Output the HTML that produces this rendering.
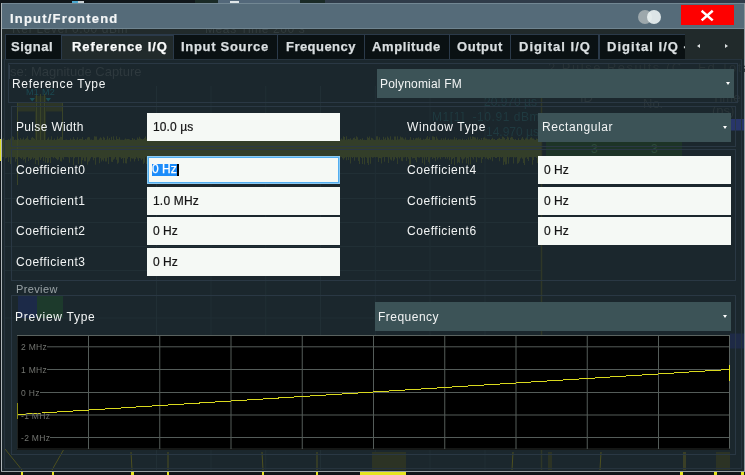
<!DOCTYPE html>
<html><head><meta charset="utf-8">
<style>
html,body{margin:0;padding:0;}
body{width:745px;height:475px;overflow:hidden;position:relative;background:#10161a;font-family:"Liberation Sans",sans-serif;}
.a{position:absolute;}
.t{position:absolute;white-space:nowrap;line-height:1;will-change:transform;}
.tab{position:absolute;top:34px;height:25.5px;background:#0a1113;border:1.5px solid #2b3a4a;box-sizing:border-box;}
.tabt{position:absolute;top:39.7px;font-weight:bold;font-size:13px;color:#d9dee0;white-space:nowrap;line-height:1;will-change:transform;-webkit-text-stroke:0.25px #d9dee0;}
.lbl{position:absolute;font-size:12px;color:#f2f4f4;white-space:nowrap;line-height:1;will-change:transform;}
.fld{position:absolute;background:#f5f9f5;box-sizing:border-box;}
.ftx{position:absolute;font-size:12px;color:#141414;white-space:nowrap;line-height:1;will-change:transform;-webkit-text-stroke:0.2px #141414;}
.dd{position:absolute;background:#3c5357;box-sizing:border-box;}
.ddt{position:absolute;font-size:12px;color:#f2f4f4;white-space:nowrap;line-height:1;will-change:transform;}
.arr{position:absolute;width:0;height:0;border-left:2.7px solid transparent;border-right:2.7px solid transparent;border-top:3.2px solid #fff;}
.grp{position:absolute;border:1px solid #2a3844;box-sizing:border-box;}
.cl{position:absolute;font-size:8.5px;color:#737571;white-space:nowrap;line-height:1;background:#000;padding:0 0 0 3px;letter-spacing:0.3px;will-change:transform;}
</style></head><body>

<!-- underlying display: top strip -->
<div class="a" style="left:195px;top:0;width:23px;height:3px;background:#1a2a26;"></div>
<div class="a" style="left:218px;top:0;width:82px;height:3px;background:#53687a;"></div>
<div class="a" style="left:300px;top:0;width:25px;height:3px;background:#1a2a26;"></div>
<div class="a" style="left:325px;top:0;width:420px;height:3px;background:#2f3b49;"></div>
<div class="a" style="left:72px;top:1px;width:6px;height:2px;background:#4aa8d0;"></div>
<div class="a" style="left:78px;top:1px;width:6px;height:2px;background:#c8d0d4;"></div>
<div class="a" style="left:230px;top:1px;width:9px;height:2px;background:#e0e6e8;"></div>
<!-- underlying edges -->
<div class="a" style="left:1px;top:3px;width:1px;height:469px;background:#aeb5b8;"></div>
<div class="a" style="left:0;top:138.5px;width:1px;height:22px;background:#dcdc22;"></div>
<div class="a" style="left:744px;top:3px;width:1px;height:469px;background:#8e989d;"></div>
<div class="a" style="left:1px;top:471px;width:744px;height:1px;background:#9aa2a5;"></div>

<!-- title bar -->
<div class="a" style="left:2px;top:3px;width:742px;height:26px;background:#556b79;"></div>
<div class="a" style="left:2px;top:3px;width:742px;height:1px;background:#728793;"></div>
<div class="a" style="left:2px;top:28px;width:742px;height:1px;background:#6f8490;"></div>
<div class="t" style="left:10.2px;top:11.7px;font-weight:bold;font-size:13px;letter-spacing:1.2px;color:#f4f6f7;-webkit-text-stroke:0.2px #f4f6f7;">Input/Frontend</div>
<div class="a" style="left:638.4px;top:10px;width:14px;height:14px;border-radius:50%;background:#9da8ac;"></div>
<div class="a" style="left:647.2px;top:10px;width:14px;height:14px;border-radius:50%;background:rgba(236,243,243,0.9);"></div>
<div class="a" style="left:680.6px;top:5px;width:53.4px;height:19.8px;background:#fe0000;"></div>
<svg class="a" style="left:680px;top:5px;" width="54" height="20" viewBox="0 0 54 20">
<path d="M22.6 6.6 L31.8 14.6 M31.8 6.6 L22.6 14.6" stroke="#fff" stroke-width="2.5" stroke-linecap="square"/>
</svg>

<!-- body -->
<div class="a" style="left:2px;top:29px;width:742px;height:442px;background:#1b272d;"></div>
<div class="a" style="left:2px;top:29px;width:742px;height:30px;background:#212a2b;"></div>

<!-- faint underlying grid -->
<svg class="a" style="left:0;top:0;" width="745" height="475">
 <g stroke="#212f35" stroke-width="1">
  <line x1="5" y1="173.5" x2="541" y2="173.5"/>
  <line x1="5" y1="198.5" x2="541" y2="198.5"/>
  <line x1="5" y1="222.5" x2="541" y2="222.5"/>
  <line x1="5" y1="246.5" x2="541" y2="246.5"/>
  <line x1="5" y1="270.5" x2="541" y2="270.5"/>
  <line x1="5" y1="318" x2="541" y2="318"/>
  <line x1="156.5" y1="86" x2="156.5" y2="470"/>
  <line x1="211" y1="86" x2="211" y2="470"/>
  <line x1="265.8" y1="86" x2="265.8" y2="470"/>
  <line x1="320.5" y1="86" x2="320.5" y2="470"/>
  <line x1="375.3" y1="86" x2="375.3" y2="470"/>
  <line x1="430" y1="86" x2="430" y2="470"/>
  <line x1="485" y1="86" x2="485" y2="470"/>
 </g>
 <line x1="541.5" y1="86" x2="541.5" y2="470" stroke="#2f3727" stroke-width="1.5"/>
 <!-- olive spectrum band -->
 <path d="M2 139.6V139.6H3V138.3H4V138.9H5V140.0H6V140.0H7V140.0H8V139.3H9V139.9H10V138.4H11V138.7H12V136.2H13V137.1H14V139.9H15V139.6H16V139.9H17V138.4H18V138.8H19V140.0H20V138.1H21V139.6H22V139.2H23V137.5H24V139.8H25V138.9H26V137.9H27V136.2H28V139.3H29V139.9H30V140.0H31V137.7H32V136.9H33V138.1H34V138.7H35V137.2H36V139.1H37V140.0H38V138.3H39V137.3H40V139.4H41V140.0H42V139.9H43V140.0H44V139.9H45V139.4H46V140.0H47V138.8H48V137.3H49V139.7H50V139.5H51V136.3H52V139.9H53V139.8H54V138.6H55V140.0H56V139.5H57V136.4H58V138.9H59V138.2H60V136.8H61V136.9H62V139.4H63V140.0H64V140.0H65V139.8H66V139.5H67V140.0H68V140.0H69V140.0H70V138.5H71V139.7H72V139.5H73V137.1H74V139.1H75V140.0H76V139.5H77V137.3H78V140.0H79V138.9H80V138.8H81V138.9H82V137.0H83V139.7H84V139.9H85V138.9H86V139.6H87V137.4H88V137.1H89V137.3H90V139.8H91V139.5H92V140.0H93V139.7H94V136.3H95V136.5H96V136.4H97V139.8H98V139.8H99V138.4H100V137.2H101V138.3H102V140.0H103V136.7H104V137.7H105V139.9H106V139.6H107V136.2H108V139.4H109V137.9H110V139.9H111V136.7H112V139.9H113V136.2H114V139.5H115V139.9H116V136.2H117V138.9H118V139.2H119V137.3H120V139.7H121V139.8H122V139.7H123V139.9H124V139.5H125V138.6H126V139.3H127V139.0H128V138.9H129V139.2H130V140.0H131V139.9H132V137.9H133V139.6H134V138.8H135V140.0H136V139.8H137V137.6H138V138.7H139V136.7H140V138.5H141V139.0H142V139.2H143V139.1H144V138.0H145V136.4H146V138.7H147V137.2H148V139.9H149V140.0H150V140.0H151V137.5H152V139.9H153V138.3H154V136.9H155V139.8H156V139.4H157V136.1H158V139.9H159V138.9H160V139.8H161V137.9H162V138.8H163V140.0H164V138.4H165V140.0H166V137.5H167V140.0H168V140.0H169V139.7H170V139.3H171V137.3H172V139.9H173V138.7H174V140.0H175V138.1H176V140.0H177V138.4H178V140.0H179V140.0H180V139.2H181V138.8H182V139.7H183V138.9H184V140.0H185V140.0H186V139.6H187V137.7H188V139.0H189V139.5H190V139.7H191V137.9H192V139.9H193V136.5H194V137.3H195V139.0H196V139.4H197V138.1H198V139.5H199V138.0H200V139.3H201V140.0H202V140.0H203V139.7H204V140.0H205V137.0H206V139.7H207V139.7H208V139.9H209V139.7H210V136.2H211V139.8H212V139.6H213V140.0H214V139.1H215V139.8H216V140.0H217V140.0H218V140.0H219V139.6H220V138.6H221V137.7H222V137.9H223V139.4H224V136.1H225V137.9H226V140.0H227V136.8H228V137.8H229V139.9H230V139.0H231V137.4H232V138.6H233V138.1H234V139.8H235V139.9H236V140.0H237V138.8H238V138.4H239V139.0H240V137.5H241V139.0H242V138.3H243V137.8H244V140.0H245V137.9H246V137.8H247V139.0H248V139.1H249V137.6H250V138.3H251V139.9H252V137.8H253V138.7H254V140.0H255V138.2H256V138.2H257V138.9H258V139.1H259V136.8H260V136.2H261V140.0H262V137.3H263V139.2H264V139.8H265V139.8H266V139.9H267V136.4H268V137.3H269V136.9H270V139.8H271V139.1H272V140.0H273V139.2H274V139.9H275V139.6H276V140.0H277V137.2H278V136.6H279V136.7H280V139.4H281V136.0H282V139.5H283V139.7H284V140.0H285V139.7H286V139.8H287V139.0H288V139.4H289V136.9H290V138.4H291V136.5H292V137.9H293V137.9H294V137.7H295V139.7H296V136.6H297V139.1H298V139.6H299V136.2H300V138.3H301V138.8H302V139.9H303V139.8H304V139.0H305V136.7H306V139.2H307V139.9H308V139.5H309V139.8H310V138.7H311V137.8H312V139.3H313V139.4H314V140.0H315V136.3H316V139.0H317V137.0H318V139.7H319V139.4H320V136.4H321V137.0H322V140.0H323V136.8H324V138.6H325V139.4H326V137.3H327V136.2H328V140.0H329V138.9H330V136.5H331V138.3H332V139.2H333V140.0H334V139.8H335V138.3H336V139.9H337V138.4H338V139.9H339V138.9H340V139.4H341V138.6H342V139.6H343V136.3H344V136.9H345V139.8H346V136.3H347V139.6H348V139.0H349V139.3H350V138.2H351V139.8H352V139.5H353V138.1H354V137.5H355V139.0H356V136.2H357V137.3H358V139.8H359V139.7H360V139.0H361V139.8H362V138.2H363V139.9H364V139.8H365V139.9H366V140.0H367V136.8H368V137.9H369V136.5H370V139.9H371V137.8H372V138.2H373V139.4H374V139.9H375V139.7H376V136.3H377V136.3H378V139.5H379V137.3H380V140.0H381V139.4H382V139.9H383V136.8H384V139.3H385V137.6H386V140.0H387V136.6H388V137.8H389V139.5H390V136.3H391V139.7H392V139.6H393V140.0H394V136.6H395V136.4H396V139.8H397V136.3H398V139.4H399V139.3H400V136.6H401V137.4H402V137.3H403V138.5H404V139.6H405V137.6H406V139.8H407V139.8H408V140.0H409V139.6H410V136.9H411V139.7H412V140.0H413V138.0H414V139.8H415V138.5H416V137.8H417V138.2H418V137.2H419V138.7H420V137.8H421V139.8H422V139.9H423V138.7H424V139.4H425V139.0H426V137.4H427V136.1H428V139.1H429V137.2H430V140.0H431V139.9H432V136.2H433V136.5H434V137.0H435V139.7H436V136.4H437V138.6H438V139.8H439V139.9H440V139.7H441V138.3H442V140.0H443V138.2H444V139.6H445V137.5H446V140.0H447V139.4H448V138.4H449V139.9H450V139.3H451V139.6H452V139.6H453V139.5H454V137.0H455V139.5H456V137.9H457V140.0H458V139.3H459V139.3H460V139.2H461V140.0H462V138.4H463V140.0H464V139.4H465V139.9H466V138.9H467V140.0H468V137.4H469V139.8H470V136.4H471V139.1H472V136.6H473V136.7H474V137.3H475V137.5H476V139.3H477V137.2H478V139.8H479V138.9H480V139.9H481V137.9H482V140.0H483V137.7H484V137.2H485V138.6H486V138.4H487V139.3H488V139.3H489V139.2H490V140.0H491V139.0H492V137.7H493V139.2H494V139.1H495V139.9H496V140.0H497V139.0H498V138.4H499V137.8H500V139.0H501V139.0H502V136.4H503V137.1H504V137.9H505V139.8H506V139.0H507V136.6H508V137.5H509V140.0H510V137.7H511V136.8H512V137.3H513V139.0H514V139.8H515V139.0H516V140.0H517V139.9H518V138.2H519V139.9H520V139.9H521V138.4H522V137.0H523V138.7H524V140.0H525V138.4H526V137.5H527V136.1H528V139.5H529V139.2H530V137.8H531V137.3H532V138.4H533V138.6H534V139.6H535V140.0H536V138.5H537V138.9H538V139.9H539V138.3H540V140.0H541V157.6H540V157.0H539V157.2H538V163.1H537V158.0H536V157.1H535V157.0H534V159.9H533V164.7H532V157.3H531V157.0H530V157.1H529V161.1H528V159.0H527V157.3H526V157.8H525V164.9H524V162.9H523V158.8H522V157.6H521V158.6H520V161.4H519V163.1H518V163.8H517V157.1H516V157.5H515V157.3H514V163.5H513V157.1H512V157.3H511V157.1H510V157.6H509V163.7H508V157.1H507V164.2H506V164.6H505V161.8H504V164.9H503V157.1H502V157.7H501V157.0H500V161.3H499V157.0H498V157.0H497V158.0H496V158.0H495V157.0H494V157.1H493V161.3H492V157.2H491V159.4H490V158.0H489V159.8H488V159.1H487V157.4H486V158.8H485V157.0H484V157.0H483V158.9H482V163.1H481V157.2H480V157.7H479V157.8H478V157.1H477V162.3H476V157.2H475V157.1H474V159.4H473V157.7H472V157.0H471V164.5H470V157.0H469V164.4H468V158.3H467V163.6H466V157.3H465V158.4H464V159.4H463V163.3H462V158.8H461V157.1H460V162.9H459V161.9H458V163.2H457V157.1H456V157.1H455V164.9H454V157.9H453V158.9H452V164.1H451V157.3H450V160.2H449V157.0H448V158.8H447V157.0H446V158.8H445V157.1H444V157.1H443V157.5H442V157.1H441V159.2H440V157.2H439V157.7H438V159.4H437V157.0H436V161.3H435V158.1H434V157.7H433V159.1H432V157.1H431V157.4H430V163.4H429V161.9H428V157.0H427V159.8H426V157.2H425V164.8H424V157.5H423V162.9H422V157.2H421V157.1H420V157.7H419V157.4H418V157.0H417V162.3H416V160.0H415V157.9H414V158.1H413V158.4H412V157.0H411V164.8H410V164.6H409V158.8H408V157.0H407V160.9H406V157.0H405V157.6H404V157.5H403V161.2H402V160.7H401V157.1H400V158.4H399V157.3H398V164.1H397V158.2H396V157.0H395V159.6H394V161.0H393V157.3H392V160.5H391V159.4H390V157.3H389V163.1H388V157.3H387V157.0H386V157.0H385V161.8H384V157.0H383V157.6H382V163.5H381V158.2H380V158.0H379V161.9H378V157.2H377V157.0H376V157.6H375V157.0H374V157.5H373V157.7H372V157.0H371V163.8H370V157.5H369V165.0H368V162.9H367V157.8H366V157.0H365V164.5H364V157.8H363V164.0H362V157.9H361V157.1H360V164.1H359V161.0H358V157.2H357V157.4H356V157.2H355V160.8H354V157.1H353V157.9H352V157.0H351V163.6H350V157.3H349V160.0H348V157.0H347V160.3H346V157.2H345V158.2H344V159.7H343V158.2H342V157.0H341V157.2H340V159.1H339V157.0H338V160.3H337V157.3H336V157.4H335V163.5H334V161.3H333V158.8H332V161.1H331V160.5H330V160.1H329V157.1H328V157.2H327V162.4H326V163.6H325V157.0H324V158.2H323V160.4H322V157.0H321V162.3H320V158.1H319V157.2H318V157.2H317V159.5H316V157.0H315V157.3H314V157.5H313V158.6H312V157.9H311V162.9H310V157.3H309V157.0H308V157.0H307V157.1H306V164.9H305V157.2H304V163.2H303V157.1H302V157.8H301V157.4H300V157.3H299V160.8H298V157.6H297V157.0H296V157.0H295V159.7H294V158.1H293V157.0H292V158.8H291V163.4H290V161.8H289V164.2H288V157.1H287V157.3H286V163.8H285V162.1H284V157.0H283V158.0H282V159.1H281V157.8H280V157.4H279V160.4H278V157.0H277V160.9H276V162.2H275V157.6H274V157.4H273V158.4H272V157.0H271V163.1H270V160.3H269V158.5H268V157.1H267V158.6H266V159.1H265V164.0H264V157.3H263V164.4H262V158.1H261V163.8H260V157.1H259V157.0H258V158.2H257V157.4H256V160.2H255V157.3H254V157.0H253V157.4H252V157.3H251V157.0H250V159.4H249V160.1H248V157.7H247V164.5H246V157.2H245V157.3H244V157.3H243V157.0H242V158.7H241V160.9H240V157.0H239V160.1H238V159.5H237V162.1H236V157.6H235V157.0H234V160.2H233V163.0H232V162.0H231V162.1H230V158.6H229V161.8H228V159.5H227V162.1H226V159.7H225V157.1H224V157.5H223V162.8H222V159.8H221V158.6H220V157.2H219V157.0H218V157.8H217V157.3H216V158.4H215V158.4H214V157.7H213V157.6H212V164.3H211V158.8H210V164.3H209V158.1H208V158.1H207V157.2H206V159.9H205V162.2H204V157.1H203V160.8H202V157.0H201V157.6H200V159.6H199V162.1H198V164.7H197V158.5H196V162.1H195V158.0H194V157.0H193V158.2H192V158.8H191V157.0H190V157.0H189V157.1H188V157.4H187V157.4H186V157.1H185V157.1H184V157.2H183V157.0H182V163.6H181V157.5H180V162.5H179V162.4H178V161.6H177V163.8H176V157.9H175V157.0H174V160.3H173V163.5H172V157.3H171V163.3H170V157.0H169V161.3H168V157.3H167V164.4H166V164.7H165V158.5H164V157.5H163V158.0H162V157.0H161V157.5H160V157.5H159V158.0H158V162.1H157V158.3H156V164.1H155V164.4H154V157.1H153V160.5H152V163.1H151V159.9H150V157.2H149V158.0H148V157.1H147V163.9H146V157.3H145V162.8H144V163.9H143V158.7H142V160.2H141V158.5H140V158.0H139V161.0H138V158.5H137V157.3H136V158.9H135V161.4H134V158.5H133V158.8H132V158.2H131V161.6H130V157.1H129V157.0H128V158.7H127V163.5H126V163.2H125V158.1H124V163.3H123V157.9H122V159.1H121V157.4H120V157.2H119V162.7H118V163.7H117V159.7H116V157.0H115V158.8H114V159.8H113V162.0H112V161.7H111V157.1H110V157.1H109V164.0H108V157.8H107V161.6H106V161.4H105V158.3H104V161.3H103V159.8H102V161.6H101V158.3H100V163.2H99V157.2H98V157.2H97V157.6H96V164.8H95V158.1H94V160.2H93V157.3H92V157.0H91V158.5H90V160.8H89V161.7H88V164.7H87V157.2H86V161.3H85V161.2H84V157.7H83V160.2H82V164.6H81V157.0H80V157.1H79V164.1H78V157.1H77V157.3H76V157.0H75V158.3H74V164.9H73V157.0H72V157.6H71V157.1H70V162.7H69V157.6H68V157.1H67V157.0H66V157.1H65V157.0H64V159.6H63V157.8H62V161.5H61V161.3H60V157.0H59V159.4H58V160.2H57V158.9H56V157.9H55V157.3H54V158.3H53V157.2H52V157.1H51V162.9H50V157.9H49V162.6H48V162.9H47V158.1H46V162.7H45V157.2H44V161.1H43V157.0H42V158.2H41V159.9H40V157.3H39V164.9H38V160.3H37V159.9H36V163.9H35V158.1H34V159.2H33V157.4H32V159.0H31V159.9H30V158.3H29V161.0H28V157.0H27V157.4H26V162.7H25V159.0H24V160.3H23V157.4H22V159.1H21V158.0H20V157.2H19V157.0H18V157.7H17V159.1H16V161.8H15V157.0H14V157.4H13V157.0H12V157.8H11V164.0H10V157.2H9V162.0H8V157.0H7V158.0H6V158.5H5V157.6H4V157.0H3V157.1H2Z" fill="#333e29"/>
 <rect x="18" y="102.5" width="45" height="9" fill="#2c3526"/>
 <rect x="35" y="96" width="11" height="44" fill="#283226"/>
 <g stroke="#3a4428" stroke-width="1"><line x1="36.5" y1="94" x2="36.5" y2="140"/><line x1="40.5" y1="94" x2="40.5" y2="140"/><line x1="44.5" y1="94" x2="44.5" y2="140"/><line x1="17.5" y1="103" x2="17.5" y2="185"/><line x1="62.5" y1="103" x2="62.5" y2="140"/></g>
 <path d="M29.5 98 L35 98 L32.2 101.5Z M45.5 98 L51 98 L48.2 101.5Z" fill="#1b5058"/>
 <rect x="546" y="141" width="136" height="16" fill="#1d3427"/>
 <text x="591" y="153" font-family="Liberation Sans" font-size="12" fill="#2d4a3b">3</text>
 <text x="651" y="153" font-family="Liberation Sans" font-size="12" fill="#2d4a3b">3</text>
 <rect x="731" y="119" width="13" height="11.5" fill="#28366a"/>
 <rect x="730" y="333.5" width="14" height="15" fill="#1e2a46"/>
 <!-- blue/green squares -->
 <rect x="18" y="296" width="19" height="22" fill="#1c2a48"/>
 <rect x="37" y="296" width="26" height="22" fill="#1d3a2c"/>
</svg>
<div class="a" style="left:9px;top:65px;width:1px;height:14px;background:#2f3c48;"></div>
<div class="t" style="left:10px;top:65px;font-size:13px;color:#2e393e;">se: Magnitude Capture</div>
<div class="t" style="left:548px;top:61px;font-size:13px;color:#273236;letter-spacing:1.5px;">2 Pulse Results (C&nbsp;&nbsp; Fd Total</div>
<div class="t" style="left:580px;top:91px;font-size:13px;color:#2a3539;">ID</div>
<div class="t" style="left:643px;top:97px;font-size:13px;color:#2a3539;">No.</div>
<div class="t" style="left:712px;top:91px;font-size:13px;color:#2a3539;">Time</div>
<div class="t" style="left:712px;top:104px;font-size:13px;color:#2a3539;">(ps)</div>
<div class="t" style="left:26px;top:88px;font-size:9px;color:#1b4a52;letter-spacing:0.3px;">M1 M2</div>
<div class="t" style="left:484px;top:95.5px;font-size:12px;color:#1f3a40;">20.970 µs</div>
<div class="t" style="left:432px;top:110.5px;font-size:12px;letter-spacing:0.55px;color:#1f3a40;">M1[1]&nbsp; -10.91 dBm</div>
<div class="t" style="left:486px;top:125.5px;font-size:12px;color:#1f3a40;">14.970 µs</div>


<!-- bottom underlying traces -->
<svg class="a" style="left:0;top:0;" width="745" height="475">
 <g stroke="#5a5a1c" stroke-width="1" fill="none" opacity="0.8">
  <path d="M5 449 L22 470"/>
  <path d="M64 449 L52 470"/>
  <path d="M131 452 L132 470 M168 452 L168 470 M262 452 L263 470 M317 452 L317 470 M513 452 L512 470 M601 452 L600 470"/>
 </g>
 <rect x="372" y="452" width="34" height="18" fill="#2c3324"/>
 <rect x="548" y="452" width="4" height="18" fill="#2c3324"/>
 <rect x="683" y="452" width="3" height="18" fill="#3a3f26"/>
 <rect x="716" y="452" width="14" height="18" fill="#2c3324"/>
 <g fill="#e6e620">
  <rect x="21" y="472" width="2" height="3"/>
  <rect x="52" y="472" width="2" height="3"/>
  <rect x="131" y="472" width="3" height="3"/>
  <rect x="167" y="472" width="2" height="3"/>
  <rect x="262" y="472" width="2" height="3"/>
  <rect x="316" y="472" width="2" height="3"/>
  <rect x="360" y="472" width="46" height="3"/>
  <rect x="680" y="472" width="3" height="3"/>
  <rect x="714" y="472" width="3" height="3"/>
  <rect x="741" y="472" width="3" height="3"/>
 </g>
</svg>

<div class="a" style="left:2px;top:29px;width:742px;height:6px;overflow:hidden;">
 <div class="t" style="left:10px;top:-6px;font-size:12px;color:#323c3e;letter-spacing:0.6px;">Ref Level 0.00 dBm</div>
 <div class="t" style="left:203px;top:-6px;font-size:12px;color:#323c3e;letter-spacing:0.6px;">Meas Time 200 s</div>
</div>
<!-- tabs -->
<div class="tab" style="left:4.5px;width:57px;"></div>
<div class="tab" style="left:173px;width:104.5px;"></div>
<div class="tab" style="left:276.5px;width:88px;"></div>
<div class="tab" style="left:363.5px;width:86px;"></div>
<div class="tab" style="left:448.5px;width:62.5px;"></div>
<div class="tab" style="left:510px;width:89px;"></div>
<div class="tab" style="left:598.5px;width:86.5px;border-right:none;"></div>
<div class="a" style="left:61px;top:34px;width:113px;height:1.5px;background:#2b3a4a;"></div>
<div class="tabt" style="left:11.3px;letter-spacing:0.5px;">Signal</div>
<div class="tabt" style="left:72.3px;letter-spacing:0.93px;color:#fafbfb;-webkit-text-stroke:0.25px #fafbfb;">Reference I/Q</div>
<div class="tabt" style="left:181px;letter-spacing:0.7px;">Input Source</div>
<div class="tabt" style="left:285.8px;letter-spacing:0.46px;">Frequency</div>
<div class="tabt" style="left:371.8px;letter-spacing:0.6px;">Amplitude</div>
<div class="tabt" style="left:457px;letter-spacing:0.56px;">Output</div>
<div class="tabt" style="left:518.5px;letter-spacing:1.02px;">Digital I/Q</div>
<div class="a" style="left:598.5px;top:34px;width:86px;height:25.5px;overflow:hidden;">
  <div class="tabt" style="left:8.8px;top:5.7px;letter-spacing:1.02px;">Digital I/Q -</div>
</div>
<div class="a" style="left:696.8px;top:43.5px;width:0;height:0;border-top:2.5px solid transparent;border-bottom:2.5px solid transparent;border-right:3.5px solid #dfe3e4;"></div>
<div class="a" style="left:725px;top:43.5px;width:0;height:0;border-top:2.5px solid transparent;border-bottom:2.5px solid transparent;border-left:3.5px solid #dfe3e4;"></div>

<!-- tab panel border -->
<div class="grp" style="left:4px;top:59px;width:737.5px;height:410px;border-color:#26333d;"></div>

<!-- group 1 -->
<div class="grp" style="left:8px;top:63px;width:730px;height:39.5px;"></div>
<div class="lbl" style="left:12.3px;top:77.8px;letter-spacing:0.68px;">Reference Type</div>
<div class="dd" style="left:376.9px;top:69px;width:357.3px;height:29.4px;"></div>
<div class="ddt" style="left:380.4px;top:77.8px;letter-spacing:0.2px;">Polynomial FM</div>
<div class="arr" style="left:725.5px;top:82.3px;"></div>

<!-- group 2a -->
<div class="grp" style="left:11px;top:106px;width:725px;height:41px;"></div>
<div class="lbl" style="left:15.6px;top:121.3px;letter-spacing:0.34px;">Pulse Width</div>
<div class="fld" style="left:146.8px;top:113.3px;width:193.5px;height:27.8px;"></div>
<div class="ftx" style="left:153px;top:120.8px;letter-spacing:0.1px;">10.0 µs</div>
<div class="lbl" style="left:406.8px;top:121.3px;letter-spacing:0.65px;">Window Type</div>
<div class="dd" style="left:538px;top:113.2px;width:192.8px;height:28.4px;"></div>
<div class="ddt" style="left:541.6px;top:121.1px;letter-spacing:0.57px;">Rectangular</div>
<div class="arr" style="left:722.6px;top:126px;"></div>

<!-- group 2b -->
<div class="grp" style="left:11px;top:149px;width:725px;height:132px;"></div>
<div class="lbl" style="left:15.6px;top:163.6px;letter-spacing:0.53px;">Coefficient0</div>
<div class="fld" style="left:146.7px;top:155.9px;width:193.6px;height:27.9px;border:1px solid #8ccaf2;box-shadow:inset 0 0 0 1px #52aef0;"></div>
<div class="a" style="left:152px;top:163.9px;width:25px;height:11.8px;background:#1a8cfa;"></div>
<div class="a" style="left:177px;top:163.9px;width:1.5px;height:11.8px;background:#000;"></div>
<div class="ftx" style="left:152.4px;top:163.4px;color:#fff;-webkit-text-stroke:0.25px #fff;">0 Hz</div>
<div class="lbl" style="left:15.6px;top:195px;letter-spacing:0.53px;">Coefficient1</div>
<div class="fld" style="left:146.8px;top:186.5px;width:193.5px;height:28.3px;"></div>
<div class="ftx" style="left:153px;top:195px;letter-spacing:0.19px;">1.0 MHz</div>
<div class="lbl" style="left:15.6px;top:225px;letter-spacing:0.53px;">Coefficient2</div>
<div class="fld" style="left:146.8px;top:217.4px;width:193.5px;height:27.8px;"></div>
<div class="ftx" style="left:152.5px;top:225px;">0 Hz</div>
<div class="lbl" style="left:15.6px;top:255.7px;letter-spacing:0.53px;">Coefficient3</div>
<div class="fld" style="left:146.8px;top:248px;width:193.5px;height:28px;"></div>
<div class="ftx" style="left:152.5px;top:255.5px;">0 Hz</div>

<div class="lbl" style="left:406.8px;top:163.6px;letter-spacing:0.54px;">Coefficient4</div>
<div class="fld" style="left:538px;top:155.7px;width:193.2px;height:28.3px;"></div>
<div class="ftx" style="left:543.6px;top:163.6px;">0 Hz</div>
<div class="lbl" style="left:406.8px;top:195px;letter-spacing:0.54px;">Coefficient5</div>
<div class="fld" style="left:538px;top:186.5px;width:193.2px;height:28.3px;"></div>
<div class="ftx" style="left:543.6px;top:195px;">0 Hz</div>
<div class="lbl" style="left:406.8px;top:225px;letter-spacing:0.54px;">Coefficient6</div>
<div class="fld" style="left:538px;top:217.4px;width:193.2px;height:27.8px;"></div>
<div class="ftx" style="left:543.6px;top:225px;">0 Hz</div>

<!-- preview -->
<div class="lbl" style="left:16px;top:283.5px;font-size:11px;color:#9aa3a6;-webkit-text-stroke:0;letter-spacing:0.37px;">Preview</div>
<div class="grp" style="left:11px;top:295px;width:725px;height:160px;"></div>
<div class="lbl" style="left:15px;top:310.8px;letter-spacing:0.72px;">Preview Type</div>
<div class="dd" style="left:374.8px;top:302px;width:356.4px;height:28.9px;"></div>
<div class="ddt" style="left:378.2px;top:310.9px;letter-spacing:0.48px;">Frequency</div>
<div class="arr" style="left:722.8px;top:315.2px;"></div>

<!-- chart -->
<svg class="a" style="left:0;top:0;" width="745" height="475">
  <rect x="17" y="335" width="713" height="115" fill="#000"/>
  <g stroke="#545c59" stroke-width="1" fill="none">
    <line x1="17" y1="335.5" x2="730" y2="335.5" stroke="#5a625f"/><line x1="729.5" y1="335" x2="729.5" y2="449" stroke="#5a625f"/><line x1="17.5" y1="336" x2="17.5" y2="449" stroke="#1e2120"/><line x1="17" y1="449" x2="730" y2="449" stroke="#2a2e2c"/>
    <line x1="88.5" y1="336" x2="88.5" y2="449"/>
    <line x1="159.75" y1="336" x2="159.75" y2="449"/>
    <line x1="231" y1="336" x2="231" y2="449"/>
    <line x1="302.25" y1="336" x2="302.25" y2="449"/>
    <line x1="373.5" y1="336" x2="373.5" y2="449"/>
    <line x1="444.75" y1="336" x2="444.75" y2="449"/>
    <line x1="516" y1="336" x2="516" y2="449"/>
    <line x1="587.25" y1="336" x2="587.25" y2="449"/>
    <line x1="658.5" y1="336" x2="658.5" y2="449"/>
    <line x1="18" y1="346.8" x2="729" y2="346.8"/>
    <line x1="18" y1="369.5" x2="729" y2="369.5"/>
    <line x1="18" y1="392.5" x2="729" y2="392.5"/>
    <line x1="18" y1="415" x2="729" y2="415"/>
    <line x1="18" y1="437.5" x2="729" y2="437.5"/>
  </g>
</svg>
<div class="cl" style="left:18px;top:343.2px;">2 MHz</div>
<div class="cl" style="left:18px;top:365.9px;">1 MHz</div>
<div class="cl" style="left:18px;top:388.9px;">0 Hz</div>
<div class="cl" style="left:18px;top:433.9px;">-2 MHz</div>
<svg class="a" style="left:0;top:0;" width="745" height="475">
  <line x1="18" y1="414.5" x2="729" y2="369.5" stroke="#d8d81e" stroke-width="1" shape-rendering="crispEdges"/>
  <rect x="17" y="403" width="1" height="16" fill="#8a8a12"/>
  <rect x="729" y="365" width="1" height="16" fill="#e2e21e"/>
</svg>
<div class="cl" style="left:18px;top:411.5px;background:none;color:#6e706c;">-1 MHz</div>

</body></html>
